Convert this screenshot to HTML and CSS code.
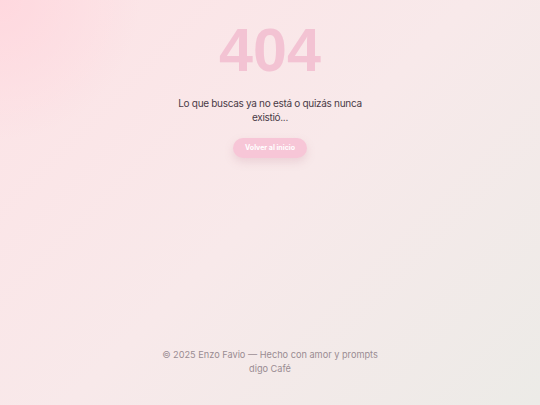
FILE: index.html
```html
<!DOCTYPE html>
<html lang="es">
<head>
<meta charset="utf-8">
<title>404</title>
<link rel="stylesheet" href="styles.css">
</head>
<body>
<main class="page">
  <section class="hero">
    <h1 class="code">404</h1>
    <p class="msg">Lo que buscas ya no está o quizás nunca existió...</p>
    <a class="btn" href="#">Volver al inicio</a>
  </section>
  <footer class="foot">© 2025 Enzo Favio — Hecho con amor y prompts digo Café</footer>
</main>
</body>
</html>
```
FILE: styles.css
```css
* { box-sizing: border-box; }
html, body { margin: 0; height: 100%; }
body {
  font-family: "Inter", "Noto Sans", sans-serif;
  background:
    radial-gradient(circle at 0 0, rgba(255, 215, 222, 0.9) 0, rgba(255, 215, 222, 0) 140px),
    linear-gradient(135deg, #fde3e6 0%, #f8e9ea 50%, #ecebe7 100%);
  color: #4a3b47;
}
.page {
  height: 100%;
  display: flex;
  flex-direction: column;
  align-items: center;
  justify-content: space-between;
  padding: 18px 0 29px;
}
.hero {
  display: flex;
  flex-direction: column;
  align-items: center;
}
.code {
  margin: 0;
  font-family: "Liberation Sans", Arial, sans-serif;
  font-size: 61px;
  font-weight: 700;
  line-height: 64px;
  color: #f3c3d3;
}
.msg {
  margin: 14px 0 0;
  width: 220px;
  text-align: center;
  font-size: 10px;
  letter-spacing: -0.3px;
  line-height: 14px;
  color: #4a3b47;
}
.btn {
  margin-top: 14px;
  display: inline-block;
  padding: 0 12px;
  height: 20px;
  line-height: 20px;
  border-radius: 10px;
  background: #f7c6d7;
  color: #fff;
  font-size: 7px;
  font-weight: 700;
  text-decoration: none;
  box-shadow: 0 4px 8px rgba(200, 140, 160, 0.25);
}
.foot {
  width: 230px;
  text-align: center;
  font-size: 9.2px;
  line-height: 14px;
  color: #9a8c92;
}
```
